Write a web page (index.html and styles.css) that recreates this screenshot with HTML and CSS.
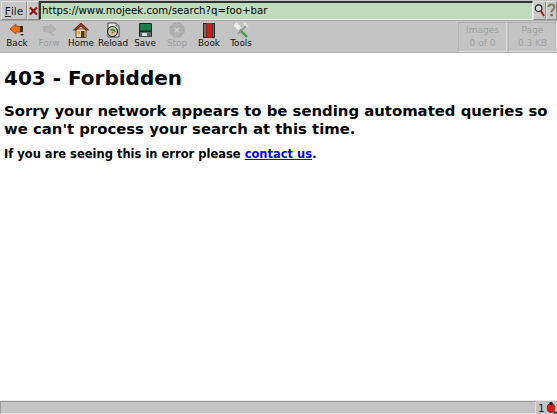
FILE: index.html
```html
<!DOCTYPE html>
<html>
<head>
<meta charset="utf-8">
<title>403 - Forbidden</title>
<link rel="stylesheet" href="styles.css">
</head>
<body>
<div class="app">
  <div class="topbar">
    <div class="tbtn file"><span class="u">F</span>ile</div>
    <div class="tbtn close"><svg width="9" height="10" viewBox="0 0 9 10"><path d="M1 1.5 L8 8.5 M8 1.5 L1 8.5" stroke="#8e1414" stroke-width="2.2"/></svg></div>
    <div class="url">https://www.mojeek.com/search?q=foo+bar</div>
    <div class="tbtn find"><svg width="12" height="17" viewBox="0 0 12 17"><circle cx="5" cy="6" r="3.6" fill="#d8d8d8" stroke="#222" stroke-width="1.3"/><path d="M7.5 9 L11 14.5" stroke="#b01818" stroke-width="2"/></svg></div>
    <div class="tbtn help"><svg width="9" height="17" viewBox="0 0 9 17"><path d="M1.5 5 C1.5 1.5 7.5 1.5 7.5 5 C7.5 7.5 4.5 7.5 4.5 10.5" fill="none" stroke="#7d7d62" stroke-width="2"/><rect x="3.5" y="12" width="2.2" height="2.2" fill="#a04030"/></svg></div>
  </div>
  <div class="toolbar">
    <div class="tool"><svg width="16" height="16" viewBox="0 0 16 16"><path d="M1 7 L7 2 V4.5 H12 V10 H7 V12 Z" fill="#f07010" stroke="#a03808" stroke-width=".8"/><rect x="11" y="4" width="3" height="6" fill="#3a2a20"/><path d="M11 12 H15 L13 14 Z" fill="#222"/></svg><span>Back</span></div>
    <div class="tool off"><svg width="16" height="16" viewBox="0 0 16 16"><path d="M15 7 L9 2 V4.5 H4 V10 H9 V12 Z" fill="#b4b4b4" stroke="#aaa" stroke-width=".8"/><rect x="2" y="4" width="3" height="6" fill="#aeaeae"/><path d="M10 12 H14 L12 14 Z" fill="#aaa"/></svg><span>Forw</span></div>
    <div class="tool"><svg width="16" height="16" viewBox="0 0 16 16"><path d="M3 7 V15.5 H13 V7 Z" fill="#e8d8b0" stroke="#4a2c18" stroke-width=".8"/><path d="M.5 8 L8 1 L15.5 8 L13 8 L8 4 L3 8 Z" fill="#a83a18" stroke="#4a1a0c" stroke-width=".8"/><rect x="8" y="9" width="3.5" height="6.5" fill="#5c3010"/><rect x="4.5" y="9" width="2.5" height="3" fill="#d8b020"/></svg><span>Home</span></div>
    <div class="tool"><svg width="16" height="16" viewBox="0 0 16 16"><path d="M3 1 H11 L14 4 V15 H3 Z" fill="#e4e4e4" stroke="#3c3c3c" stroke-width=".9"/><path d="M11 1 V4 H14" fill="#aaa" stroke="#444" stroke-width=".6"/><circle cx="7.5" cy="9.5" r="5" fill="#c8c8b4" stroke="#2a2a2a" stroke-width="1.1"/><path d="M5.5 8 A3 3 0 0 1 10 10" stroke="#3a8a2a" stroke-width="1.8" fill="none"/><circle cx="7.5" cy="10.5" r="1.1" fill="#b05a20"/></svg><span>Reload</span></div>
    <div class="tool"><svg width="16" height="16" viewBox="0 0 16 16"><rect x="2" y="1" width="13" height="14" rx="1" fill="#1d2a24"/><rect x="3" y="2" width="11" height="6.5" fill="#1f7a4c"/><rect x="3" y="10" width="11" height="4.5" fill="#5a6a62"/><rect x="5" y="11" width="5" height="3" fill="#d8e0dc"/></svg><span>Save</span></div>
    <div class="tool off"><svg width="16" height="16" viewBox="0 0 16 16"><path d="M5 1 H11 L15 5 V11 L11 15 H5 L1 11 V5 Z" fill="#aeaeae" stroke="#a8a8a8"/><path d="M5.8 5.8 L10.2 10.2 M10.2 5.8 L5.8 10.2" stroke="#cfcfcf" stroke-width="1.5"/></svg><span>Stop</span></div>
    <div class="tool"><svg width="16" height="16" viewBox="0 0 16 16"><rect x="2.5" y="1.5" width="11" height="14" fill="#2c2020" stroke="#111" stroke-width=".8"/><rect x="5.5" y="1" width="5.5" height="14.5" fill="#d01c1c"/><rect x="3.5" y="2" width="1" height="13" fill="#bba"/><rect x="11.8" y="2" width="1" height="13" fill="#8a7a70"/></svg><span>Book</span></div>
    <div class="tool"><svg width="16" height="16" viewBox="0 0 16 16"><path d="M2 2 L7 7" stroke="#efefef" stroke-width="4"/><path d="M7 8 L14 15" stroke="#4a9a3a" stroke-width="2.4"/><path d="M14 3 L5 12" stroke="#8f8f8f" stroke-width="1.6"/><path d="M11 1 L15 5" stroke="#e4e4e4" stroke-width="2"/></svg><span>Tools</span></div>
    <div class="spacer"></div>
    <div class="stat"><div>Images</div><div>0 of 0</div></div>
    <div class="stat"><div>Page</div><div>0.3 KB</div></div>
  </div>
  <main class="page">
    <h1>403 - Forbidden</h1>
    <h2>Sorry your network appears to be sending automated queries so we can't process your search at this time.</h2>
    <h3>If you are seeing this in error please <a href="#">contact us</a>.</h3>
  </main>
  <div class="statusbar">
    <div class="msg"></div>
    <div class="bug">1<svg width="12" height="13" viewBox="0 0 12 13"><ellipse cx="6" cy="7" rx="3.8" ry="4.4" fill="#d81c1c" stroke="#611" stroke-width=".7"/><circle cx="6" cy="2.4" r="1.7" fill="#222"/><path d="M8.5 11.5 H12" stroke="#222" stroke-width="1.6"/></svg></div>
  </div>
</div>
</body>
</html>
```

FILE: styles.css
```css
* { box-sizing: border-box; }
html, body { margin: 0; padding: 0; height: 100%; }
body { background: #fff; font-family: "DejaVu Sans", sans-serif; overflow: hidden; }
.app { display: flex; flex-direction: column; height: 414px; width: 557px; }

.topbar { display: flex; height: 21px; background: #c4c4c4; border-bottom: 1px solid #a8a8a8; padding-top: 1px; }
.tbtn { display: flex; align-items: center; justify-content: center; background: #c8c8c8; border: 1px solid; border-color: #e4e4e4 #8c8c8c #8c8c8c #e4e4e4; color: #222; font-size: 10.5px; }
.file { width: 26px; margin-left: 1px; }
.close { width: 12px; }
.u { text-decoration: underline; }
.url { flex: 1; min-width: 0; background: #bedcbc; border: 1px solid; border-color: #333 #ececec #ececec #333; border-top-width: 2px; border-left-width: 2px; font-size: 10.2px; line-height: 15px; padding-left: 1px; color: #000; white-space: nowrap; }
.find { width: 13px; overflow: hidden; }
.help { width: 11px; }

.toolbar { display: flex; height: 32px; background: #c4c4c4; border-bottom: 1px solid #b0b0b0; padding-left: 1px; }
.tool { width: 32px; display: flex; flex-direction: column; align-items: center; font-size: 8.8px; color: #111; line-height: 11px; padding-top: 1px; }
.tool svg { flex: none; }
.tool span { white-space: nowrap; }
.tool.off { color: #9c9c9c; }
.spacer { flex: 1; }
.stat { width: 49px; margin: 1px 0 0 1px; border: 1px solid; border-color: #b2b2b2 #dcdcdc #dcdcdc #b2b2b2; color: #a0a0a0; font-size: 9px; line-height: 13px; text-align: center; padding-top: 1px; }

.page { flex: 1; padding: 0 4px; color: #000; min-height: 0; }
h1 { margin: 13px 0 0; font-size: 20px; line-height: 24px; font-weight: bold; }
h2 { margin: 12px 0 0; font-size: 14.87px; line-height: 18px; font-weight: bold; }
h3 { margin: 9px 0 0; font-size: 11.5px; line-height: 15px; font-weight: bold; }
a { color: #0000ee; text-decoration: underline; }

.statusbar { display: flex; height: 14px; background: #c4c4c4; border-top: 1px solid #e8e8e8; }
.msg { flex: 1; border: 1px solid; border-color: #9a9a9a #e0e0e0 #e0e0e0 #9a9a9a; }
.bug { width: 21px; display: flex; align-items: center; font-size: 10.5px; color: #222; padding-left: 2px; }
.bug svg { flex: none; }
```
